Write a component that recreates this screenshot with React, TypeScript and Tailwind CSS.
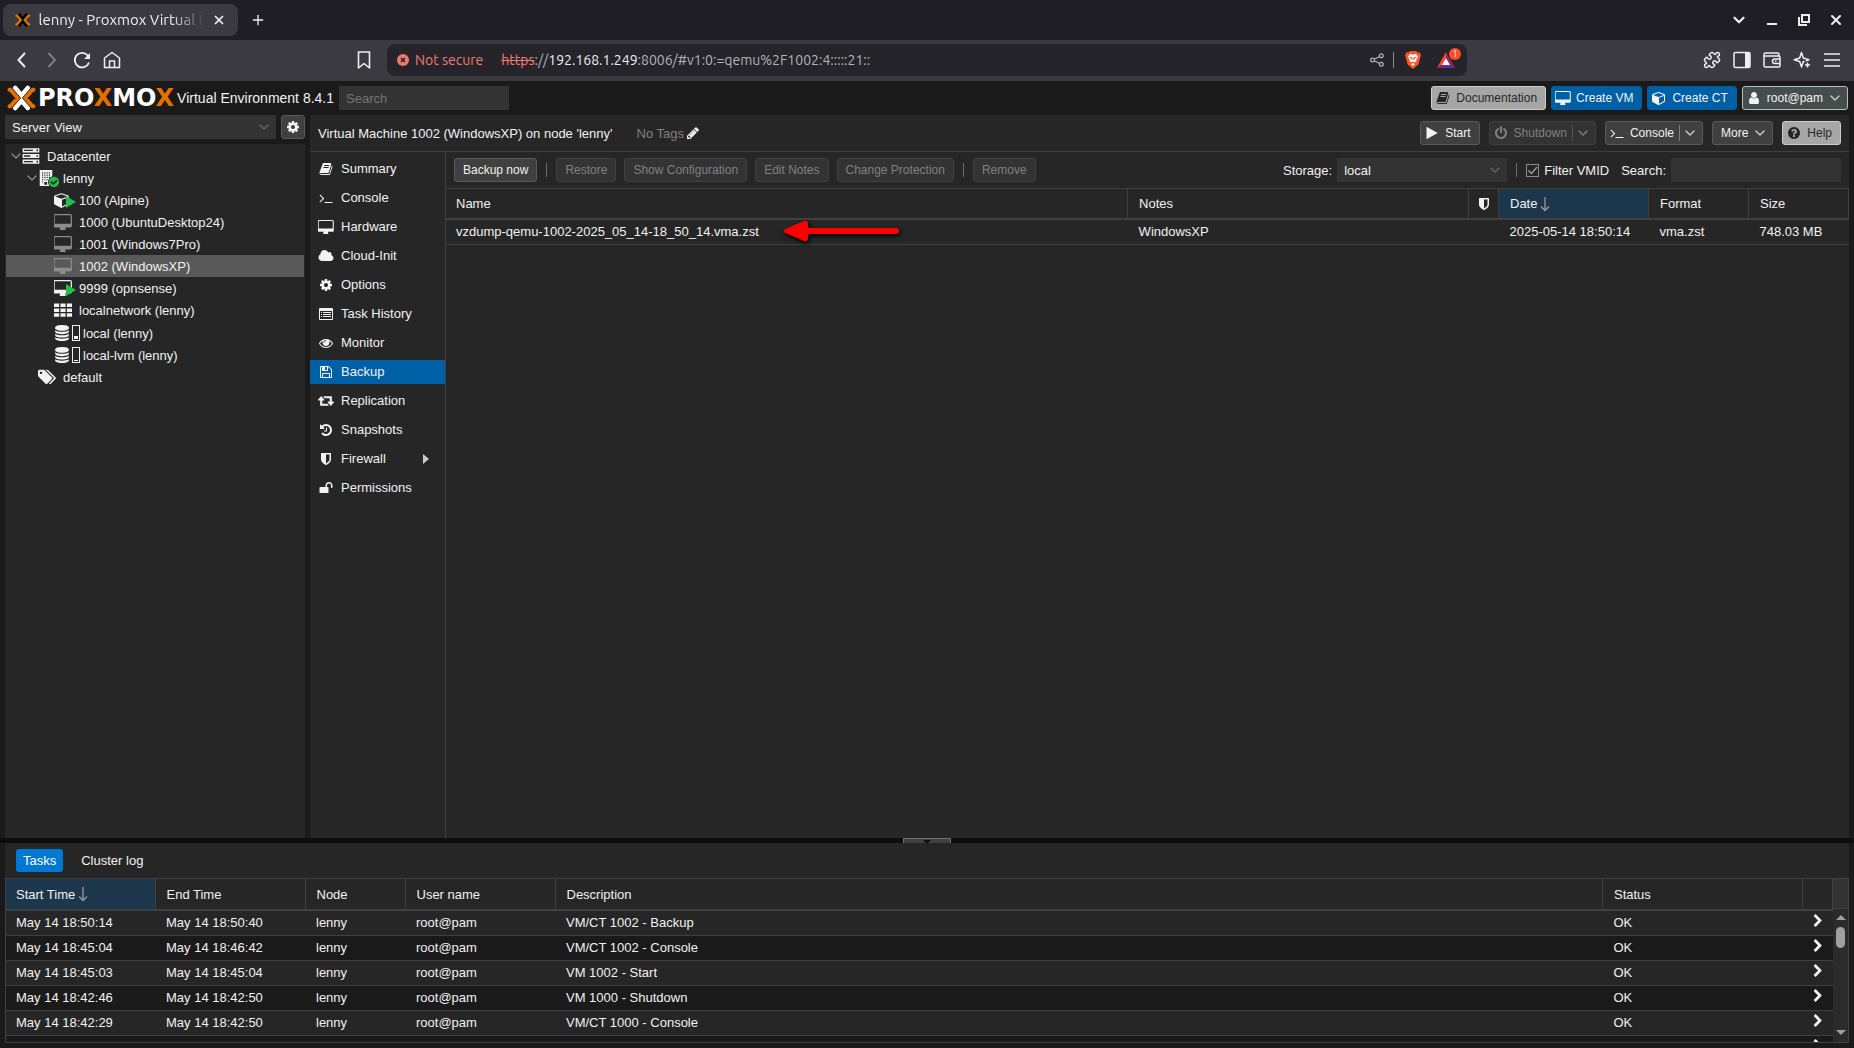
import type { ReactNode } from "react";
import clsx from "clsx";
import { ChevronDown, Plus, Puzzle, X } from "lucide-react";

const PATHS = {
  desktop:
    "M1728 992v-832q0-13-9.5-22.5t-22.5-9.5h-1600q-13 0-22.5 9.5t-9.5 22.5v832q0 13 9.5 22.5t22.5 9.5h1600q13 0 22.5-9.5t9.5-22.5zm128-832v1088q0 66-47 113t-113 47h-544q0 37 16 77.5t32 71 16 43.5q0 26-19 45t-45 19h-512q-26 0-45-19t-19-45q0-14 16-44t32-70 16-78h-544q-66 0-113-47t-47-113v-1088q0-66 47-113t113-47h1600q66 0 113 47t47 113z",
  cube: "M896 1629l640-349v-636l-640 233v752zm-64-865l698-254-698-254-698 254zm832-252v768q0 35-18 65t-49 47l-704 384q-28 16-61 16t-61-16l-704-384q-31-17-49-47t-18-65v-768q0-40 23-73t61-47l704-256q22-8 44-8t44 8l704 256q38 14 61 47t23 73z",
  cog: "M1152 896q0-106-75-181t-181-75-181 75-75 181 75 181 181 75 181-75 75-181zm512-109v222q0 12-8 23t-20 13l-185 28q-19 54-39 91 35 50 107 138 10 12 10 25t-9 23q-27 37-99 108t-94 71q-12 0-26-9l-138-108q-44 23-91 38-16 136-29 186-7 28-36 28h-222q-14 0-24.5-8.5t-11.5-21.5l-28-184q-49-16-90-37l-141 107q-10 9-25 9-14 0-25-11-126-114-165-168-7-10-7-23 0-12 8-23 15-21 51-66.5t54-70.5q-27-50-41-99l-183-27q-13-2-21-12.5t-8-23.5v-222q0-12 8-23t19-13l186-28q14-46 39-92-40-57-107-138-10-12-10-24 0-10 9-23 26-36 98.5-107.5t94.5-71.5q13 0 26 10l138 107q44-23 91-38 16-136 29-186 7-28 36-28h222q14 0 24.5 8.5t11.5 21.5l28 184q49 16 90 37l142-107q9-9 24-9 13 0 25 10 129 119 165 170 7 8 7 22 0 12-8 23-15 21-51 66.5t-54 70.5q26 50 41 98l183 28q13 2 21 12.5t8 23.5z",
  eye: "M1664 960q-152-236-381-353 61 104 61 225 0 185-131.5 316.5t-316.5 131.5-316.5-131.5-131.5-316.5q0-121 61-225-229 117-381 353 133 205 333.5 326.5t434.5 121.5 434.5-121.5 333.5-326.5zm-720-384q0-20-14-34t-34-14q-125 0-214.5 89.5t-89.5 214.5q0 20 14 34t34 14 34-14 14-34q0-86 61-147t147-61q20 0 34-14t14-34zm848 384q0 34-20 69-140 230-376.5 368.5t-499.5 138.5-499.5-139-376.5-368q-20-35-20-69t20-69q140-229 376.5-368t499.5-139 499.5 139 376.5 368q20 35 20 69z",
  book: "M1703 478q40 57 18 129l-275 906q-19 64-76.5 107.5t-122.5 43.5h-923q-77 0-148.5-53.5t-99.5-131.5q-24-67-2-127 0-4 3-27t4-37q1-8-3-21.5t-3-19.5q2-11 8-21t16.5-23.5 16.5-23.5q23-38 45-91.5t30-91.5q3-10 .5-30t-.5-28q3-11 17-28t17-23q21-36 42-92t25-90q1-9-2.5-32t.5-28q4-13 22-30.5t22-22.5q19-26 42.5-84.5t27.5-96.5q1-8-3-25.5t-2-26.5q2-8 9-18t18-23 17-21q8-12 16.5-30.5t15-35 16-36 19.5-32 26.5-23.5 36-11.5 47.5 5.5l-1 3q38-9 51-9h761q74 0 114 56t18 130l-274 906q-36 119-71.5 153.5t-128.5 34.5h-869q-27 0-38 15-11 16-1 43 24 70 144 70h923q29 0 56-15.5t35-41.5l300-987q7-22 5-57 38 15 59 43zm-1064 2q-4 13 2 22.5t20 9.5h608q13 0 25.5-9.5t16.5-22.5l21-64q4-13-2-22.5t-20-9.5h-608q-13 0-25.5 9.5t-16.5 22.5zm-83 256q-4 13 2 22.5t20 9.5h608q13 0 25.5-9.5t16.5-22.5l21-64q4-13-2-22.5t-20-9.5h-608q-13 0-25.5 9.5t-16.5 22.5z",
  terminal:
    "M649 983l-466 466q-10 10-23 10t-23-10l-50-50q-10-10-10-23t10-23l393-393-393-393q-10-10-10-23t10-23l50-50q10-10 23-10t23 10l466 466q10 10 10 23t-10 23zm1079 457v64q0 14-9 23t-23 9h-960q-14 0-23-9t-9-23v-64q0-14 9-23t23-9h960q14 0 23 9t9 23z",
  cloud:
    "M1984 1152q0 159-112.5 271.5t-271.5 112.5h-1088q-185 0-316.5-131.5t-131.5-316.5q0-132 71-241.5t187-163.5q-2-28-2-43 0-212 150-362t362-150q158 0 286.5 88t187.5 230q70-62 166-62 106 0 181 75t75 181q0 75-41 138 129 30 213 134.5t84 239.5z",
  list: "M0 256q0-128 128-128h1536q128 0 128 128v1280q0 128-128 128h-1536q-128 0-128-128zM128 512v992q0 32 32 32h1472q32 0 32-32v-992zM256 640h128v128h-128zM512 640h1024v128h-1024zM256 896h128v128h-128zM512 896h1024v128h-1024zM256 1152h128v128h-128zM512 1152h1024v128h-1024z",
  floppy:
    "M512 1536h768v-384h-768v384zm896 0h128v-896q0-14-10-38.5t-20-34.5l-281-281q-10-10-34-20t-39-10v416q0 40-28 68t-68 28h-576q-40 0-68-28t-28-68v-416h-128v1280h128v-416q0-40 28-68t68-28h832q40 0 68 28t28 68v416zm-384-928v-320q0-13-9.5-22.5t-22.5-9.5h-192q-13 0-22.5 9.5t-9.5 22.5v320q0 13 9.5 22.5t22.5 9.5h192q13 0 22.5-9.5t9.5-22.5zm640 32v928q0 40-28 68t-68 28h-1344q-40 0-68-28t-28-68v-1344q0-40 28-68t68-28h928q40 0 88 20t76 48l280 280q28 28 48 76t20 88z",
  retweet:
    "M1280 1504q0 13-9.5 22.5t-22.5 9.5h-960q-8 0-13.5-2t-9-7-5.5-8-3-11.5-1-11.5v-600h-192q-26 0-45-19t-19-45q0-24 15-41l320-384q19-22 49-22t49 22l320 384q15 17 15 41 0 26-19 45t-45 19h-192v384h576q16 0 25 11l160 192q7 10 7 21zm640-416q0 24-15 41l-320 384q-20 23-49 23t-49-23l-320-384q-15-17-15-41 0-26 19-45t45-19h192v-384h-576q-16 0-25-12l-160-192q-7-9-7-20 0-13 9.5-22.5t22.5-9.5h960q8 0 13.5 2t9 7 5.5 8 3 11.5 1 11.5v600h192q26 0 45 19t19 45z",
  history:
    "M1664 896q0 156-61 298t-164 245-245 164-298 61q-172 0-327-72.5t-264-204.5q-7-10-6.5-22.5t8.5-20.5l137-138q10-9 25-9 16 2 23 12 73 95 179 147t225 52q104 0 198.5-40.5t163.5-109.5 109.5-163.5 40.5-198.5-40.5-198.5-109.5-163.5-163.5-109.5-198.5-40.5q-98 0-188 35.5t-160 101.5l137 138q31 30 14 69-17 40-59 40h-448q-26 0-45-19t-19-45v-448q0-42 40-59 39-17 69 14l130 129q107-101 244.5-156.5t284.5-55.5q156 0 298 61t245 164 164 245 61 298zm-640-288v448q0 14-9 23t-23 9h-320q-14 0-23-9t-9-23v-64q0-14 9-23t23-9h224v-352q0-14 9-23t23-9h64q14 0 23 9t9 23z",
  shield:
    "M1344 960v-640h-448v1137q119-63 213-137 235-184 235-360zm192-768v768q0 86-33.5 170.5t-83 150-118 127.5-126.5 103-121 77.5-89.5 49.5-42.5 20q-12 6-26 6t-26-6q-16-7-42.5-20t-89.5-49.5-121-77.5-126.5-103-118-127.5-83-150-33.5-170.5v-768q0-26 19-45t45-19h1152q26 0 45 19t19 45z",
  unlock:
    "M1728 576v256q0 26-19 45t-45 19h-64q-26 0-45-19t-19-45v-256q0-106-75-181t-181-75-181 75-75 181v192h96q40 0 68 28t28 68v576q0 40-28 68t-68 28h-960q-40 0-68-28t-28-68v-576q0-40 28-68t68-28h672v-192q0-185 131.5-316.5t316.5-131.5 316.5 131.5 131.5 316.5z",
  database:
    "M896 768q237 0 443-43t325-127v170q0 69-103 128t-280 93.5-385 34.5-385-34.5-280-93.5-103-128v-170q119 84 325 127t443 43zm0 768q237 0 443-43t325-127v170q0 69-103 128t-280 93.5-385 34.5-385-34.5-280-93.5-103-128v-170q119 84 325 127t443 43zm0-384q237 0 443-43t325-127v170q0 69-103 128t-280 93.5-385 34.5-385-34.5-280-93.5-103-128v-170q119 84 325 127t443 43zm0-1152q208 0 385 34.5t280 93.5 103 128v128q0 69-103 128t-280 93.5-385 34.5-385-34.5-280-93.5-103-128v-128q0-69 103-128t280-93.5 385-34.5z",
  tags: "M448 448q0-53-37.5-90.5t-90.5-37.5-90.5 37.5-37.5 90.5 37.5 90.5 90.5 37.5 90.5-37.5 37.5-90.5zm1067 576q0 53-37 90l-491 492q-39 37-91 37-53 0-90-37l-715-716q-38-37-64.5-101t-26.5-117v-416q0-52 38-90t90-38h416q53 0 117 26.5t102 64.5l715 714q37 39 37 91zm384 0q0 53-37 90l-491 492q-39 37-91 37-36 0-59-14t-53-45l470-470q37-37 37-90 0-52-37-91l-715-714q-38-38-102-64.5t-117-26.5h224q53 0 117 26.5t102 64.5l715 714q37 39 37 91z",
  power:
    "M1664 896q0 156-61 298t-164 245-245 164-298 61-298-61-245-164-164-245-61-298q0-182 80.5-343t226.5-270q43-32 95.5-25t83.5 50q32 42 24.5 94.5t-49.5 84.5q-98 74-151.5 181t-53.5 228q0 104 40.5 198.5t109.5 163.5 163.5 109.5 198.5 40.5 198.5-40.5 163.5-109.5 109.5-163.5 40.5-198.5q0-121-53.5-228t-151.5-181q-42-32-49.5-84.5t24.5-94.5q31-43 84-50t95 25q146 109 226.5 270t80.5 343zm-640-768v640q0 52-38 90t-90 38-90-38-38-90v-640q0-52 38-90t90-38 90 38 38 90z",
  play: "M1576 927l-1328 738q-23 13-39.5 3t-16.5-36v-1472q0-26 16.5-36t39.5 3l1328 738q23 13 23 31t-23 31z",
  question:
    "M1024 1376v-192q0-14-9-23t-23-9h-192q-14 0-23 9t-9 23v192q0 14 9 23t23 9h192q14 0 23-9t9-23zm256-672q0-88-55.5-163t-138.5-116-170-41q-243 0-371 213-15 24 8 42l132 100q7 6 19 6 16 0 25-12 53-68 86-92 34-24 86-24 48 0 85.5 26t37.5 59q0 38-20 61t-68 45q-63 28-115.5 86.5t-52.5 125.5v36q0 14 9 23t23 9h192q14 0 23-9t9-23q0-19 21.5-49.5t54.5-49.5q32-18 49-28.5t46-35 44.5-48 28-60.5 12.5-81zm384 192q0 209-103 385.5t-279.5 279.5-385.5 103-385.5-103-279.5-279.5-103-385.5 103-385.5 279.5-279.5 385.5-103 385.5 103 279.5 279.5 103 385.5z",
  check:
    "M1412 734q0-28-18-46l-91-90q-19-19-45-19t-45 19l-408 407-226-226q-19-19-45-19t-45 19l-91 90q-18 18-18 46 0 27 18 45l362 362q19 19 45 19 27 0 46-19l543-543q18-18 18-45zm252 162q0 209-103 385.5t-279.5 279.5-385.5 103-385.5-103-279.5-279.5-103-385.5 103-385.5 279.5-279.5 385.5-103 385.5 103 279.5 279.5 103 385.5z",
  chevron:
    "M1363 877l-742 742q-19 19-45 19t-45-19l-166-166q-19-19-19-45t19-45l531-531-531-531q-19-19-19-45t19-45l166-166q19-19 45-19t45 19l742 742q19 19 19 45t-19 45z",
  user: "M1536 1399q0 109-62.5 187t-150.5 78h-854q-88 0-150.5-78t-62.5-187q0-85 8.5-160.5t31.5-152 58.5-131 94-89 134.5-34.5q131 128 313 128t313-128q76 0 134.5 34.5t94 89 58.5 131 31.5 152 8.5 160.5zm-256-887q0 159-112.5 271.5t-271.5 112.5-271.5-112.5-112.5-271.5 112.5-271.5 271.5-112.5 271.5 112.5 112.5 271.5z",
  pencil:
    "M491 1536l91-91-235-235-91 91v107h128v128h107zm523-928q0-22-22-22-10 0-17 7l-542 542q-7 7-7 17 0 22 22 22 10 0 17-7l542-542q7-7 7-17zm-54-192l416 416-832 832h-416v-416zm683 96q0 53-37 90l-166 166-416-416 166-165q36-38 90-38 53 0 91 38l235 234q37 39 37 91z",
  server:
    "M64 128h1664v416h-1664zM64 688h1664v416h-1664zM64 1248h1664v416h-1664zM192 272v128h896v-128zM1440 256v160h160v-160zM192 832v128h640v-128zM1440 816v160h160v-160zM192 1392v128h896v-128zM1440 1376v160h160v-160z",
  building:
    "M192 0h1408v1792h-1408zM448 256v128h128v-128zM704 256v128h128v-128zM960 256v128h128v-128zM1216 256v128h128v-128zM448 512v128h128v-128zM704 512v128h128v-128zM960 512v128h128v-128zM1216 512v128h128v-128zM448 768v128h128v-128zM704 768v128h128v-128zM960 768v128h128v-128zM1216 768v128h128v-128zM448 1024v128h128v-128zM704 1024v128h128v-128zM960 1024v128h128v-128zM448 1280v128h128v-128zM704 1344v320h320v-320z",
  th: "M0 256h512v352h-512zM640 256h512v352h-512zM1280 256h512v352h-512zM0 736h512v352h-512zM640 736h512v352h-512zM1280 736h512v352h-512zM0 1216h512v352h-512zM640 1216h512v352h-512zM1280 1216h512v352h-512z",
};

type IconName = keyof typeof PATHS;

// glyphs that are wider than the 1792 unit square
const WIDE: Partial<Record<IconName, string>> = {
  desktop: "0 0 1856 1664",
  cloud: "0 64 2048 1664",
  retweet: "0 128 1920 1664",
  tags: "0 0 1920 1792",
};

interface IconProps {
  name: IconName;
  className?: string;
}

const Icon = ({ name, className = "size-3.5" }: IconProps) => (
  <svg
    viewBox={WIDE[name] ?? "0 0 1792 1792"}
    className={clsx("shrink-0 fill-current", className)}
    fillRule={
      ["server", "building", "list"].includes(name) ? "evenodd" : "nonzero"
    }
    aria-hidden="true"
  >
    <path d={PATHS[name]} />
  </svg>
);

interface ToolButtonProps {
  icon?: IconName;
  label: string;
  tone?: "dark" | "light" | "blue" | "user";
  disabled?: boolean;
  arrow?: boolean;
  split?: boolean;
}

const ToolButton = ({
  icon,
  label,
  tone = "dark",
  disabled,
  arrow,
  split,
}: ToolButtonProps) => (
  <button
    type="button"
    disabled={disabled}
    className={clsx(
      "flex h-6 shrink-0 items-center rounded-[3px] border text-xs whitespace-nowrap",
      icon ? "pl-[3px]" : "pl-2",
      arrow ? "pr-1" : "pr-2",
      disabled && "border-[#404040] bg-[#333333] text-[#808080]",
      !disabled && tone === "dark" && "border-[#595959] bg-[#404040] text-[#f2f2f2]",
      tone === "light" && "border-[#cccccc] bg-[#a6a6a6] text-[#262626]",
      tone === "blue" && "border-[#0060a6] bg-[#0060a6] text-[#f2f2f2]",
      tone === "user" && "border-[#b5bfbd] bg-[#464d4d] text-[#f2f2f2]",
    )}
  >
    {icon && (
      <span className="mr-[5px] flex w-4 justify-center">
        <Icon
          name={icon}
          className={icon === "desktop" ? "h-3.5 w-4" : "size-3.5"}
        />
      </span>
    )}
    {label}
    {split && (
      <span
        className={clsx(
          "ml-[5px] h-4 w-px",
          disabled ? "bg-[#555555]" : "bg-[#808080]",
        )}
      />
    )}
    {arrow && (
      <ChevronDown
        size={16}
        strokeWidth={2}
        className={clsx(split ? "ml-0.5" : "ml-1", !disabled && "text-[#cccccc]")}
      />
    )}
  </button>
);

const Separator = () => <span className="mx-px h-3.5 w-px bg-[#6b6b6b]" />;

const ProxmoxMark = ({
  className,
  inner,
}: {
  className: string;
  inner: string;
}) => (
  <svg viewBox="0 0 30 26" className={className} fill="none" aria-hidden="true">
    <path d="M8.500 2.500 15 10l6.500-7.500M8.500 23.500 15 16l6.500 7.500" stroke={inner} strokeWidth="4.600" strokeLinecap="round" />
    <path d="M2.500 4.500h1L11 13l-7.500 8.500h-1M27.500 4.500h-1L19 13l7.500 8.500h1" stroke="#e57000" strokeWidth="4" strokeLinecap="round" />
  </svg>
);

const Browser = () => (
  <header className="font-['Ubuntu','Noto_Sans',sans-serif] text-sm text-[#eeeef2]">
    <div className="flex h-10 items-center bg-[#1f1e24] pl-[3px]">
      <div className="flex h-8 w-[235px] items-center rounded-lg bg-[#3b3a40] px-3">
        <ProxmoxMark className="h-4 w-4" inner="#000000" />
        <span className="ml-2 w-[170px] overflow-hidden text-[15px] whitespace-nowrap [mask-image:linear-gradient(to_right,black_80%,transparent)]">
          lenny - Proxmox Virtual E
        </span>
        <button type="button" aria-label="Close tab" className="ml-2">
          <X size={14} strokeWidth={3} />
        </button>
      </div>
      <button type="button" aria-label="New tab" className="ml-3">
        <Plus size={16} strokeWidth={2} />
      </button>
      <div className="ml-auto flex items-center pr-2.5">
        <button type="button" aria-label="Search tabs" className="mr-4">
          <ChevronDown size={18} strokeWidth={3} />
        </button>
        <button type="button" aria-label="Minimize" className="mr-4 flex size-4 items-end justify-center pb-[3px]">
          <span className="h-0.5 w-2.5 bg-current" />
        </button>
        <button type="button" aria-label="Restore window" className="mr-4">
          <svg viewBox="0 0 16 16" className="size-4" fill="none" stroke="currentColor" strokeWidth="2">
            <path d="M6 3h7v7H6zM3 5v8h8" />
          </svg>
        </button>
        <button type="button" aria-label="Close window">
          <X size={16} strokeWidth={3} />
        </button>
      </div>
    </div>
    <div className="flex h-[41px] items-center bg-[#3b3a40] pb-px pl-3">
      <button type="button" aria-label="Back">
        <svg viewBox="0 0 20 20" className="size-5" fill="none" stroke="currentColor" strokeWidth="2">
          <path d="M13 3 6.500 10l6.500 7" />
        </svg>
      </button>
      <button type="button" aria-label="Forward" className="ml-2.5 text-[#7c7b82]">
        <svg viewBox="0 0 20 20" className="size-5" fill="none" stroke="currentColor" strokeWidth="2">
          <path d="m6.500 3 6.500 7-6.500 7" />
        </svg>
      </button>
      <button type="button" aria-label="Reload" className="ml-2.5">
        <svg viewBox="0 0 20 20" className="size-5" fill="none" stroke="currentColor" strokeWidth="1.800">
          <path d="M17 12.500A7.300 7.300 0 1 1 16 5.800" />
          <path d="M18 3v6h-6z" fill="currentColor" stroke="none" />
        </svg>
      </button>
      <button type="button" aria-label="Home" className="ml-2.5">
        <svg viewBox="0 0 20 20" className="size-5" fill="none" stroke="currentColor" strokeWidth="1.500">
          <path d="M2.500 8 10 2.500 17.500 8v9.500h-15zM7.500 17v-6h5v6" strokeLinejoin="round" />
        </svg>
      </button>
      <button type="button" aria-label="Bookmark this page" className="ml-[232px]">
        <svg viewBox="0 0 20 20" className="size-5" fill="none" stroke="currentColor" strokeWidth="1.600">
          <path d="M4.500 2h11v16L10 13.500 4.500 18z" strokeLinejoin="round" />
        </svg>
      </button>
      <div className="ml-[13px] flex h-8 w-[1080px] min-w-0 items-center rounded-lg bg-[#25242a] pr-2 pl-2.5">
        <svg viewBox="0 0 12 12" className="size-3" aria-hidden="true">
          <circle cx="6" cy="6" r="6" fill="#f1786f" />
          <path d="m4 4 4 4m0-4-4 4" stroke="#25242a" strokeWidth="1.600" />
        </svg>
        <span className="ml-1.5 text-[#f1786f]">Not secure</span>
        <span className="ml-[18px] text-[#b4b3ba]">
          <s className="text-[#f1786f]">https</s>://
          <span className="text-[#eeeef2]">192.168.1.249</span>
          :8006/#v1:0:=qemu%2F1002:4:::::21::
        </span>
        <div className="ml-auto flex items-center">
          <button type="button" aria-label="Share">
            <svg viewBox="0 0 14 14" className="size-3.5 text-[#b4b3ba]" fill="none" stroke="currentColor" strokeWidth="1.200">
              <circle cx="2.500" cy="7" r="1.900" />
              <circle cx="11.300" cy="2.700" r="1.900" />
              <circle cx="11.300" cy="11.300" r="1.900" />
              <path d="m4.200 6.200 5.400-2.700M4.200 7.800l5.400 2.700" />
            </svg>
          </button>
          <span className="mx-[9px] h-4 w-px bg-[#8a8990]" />
          <button type="button" aria-label="Brave Shields" className="ml-0.5">
            <svg viewBox="0 0 16 18" className="h-[18px] w-4">
              <path d="M3.500 1.500 4.800 0h6.400l1.300 1.500 2-.2L16 4.500l-.6 1.500-2 7.500L8 18l-5.400-4.500L.6 6 0 4.500l1.500-3.200z" fill="#fb542b" />
              <path d="m8 3.500 3-.6 2.200 3-2 2.600.3 1.700-2 1.100L8 10.700l-1.500.6-2-1.100.3-1.700-2-2.600L5 2.900zM8 12l2 1.200L8 15l-2-1.800z" fill="#fff" />
              <path d="m4.500 6 2.300.8L6.200 8M11.500 6l-2.300.8.600 1.200M8 6.500v3" stroke="#fb542b" fill="none" />
            </svg>
          </button>
          <button type="button" aria-label="Brave Rewards" className="relative mr-1 ml-4">
            <svg viewBox="0 0 18 16" className="h-4 w-[18px]">
              <path d="M9 0 0 16l5-3 4-7z" fill="#ff4724" />
              <path d="M9 0v6l4 7 5 3z" fill="#9e1f63" />
              <path d="m0 16 5-3h8l5 3z" fill="#662d91" />
              <path d="m9 6 4 7H5z" fill="#fff" />
            </svg>
            <span className="absolute -top-1 left-3 flex size-3 items-center justify-center rounded-full bg-[#fb4f2b] text-[9px] leading-none">
              1
            </span>
          </button>
        </div>
      </div>
      <div className="ml-auto flex items-center gap-3 pr-[13px]">
        <button type="button" aria-label="Extensions">
          <Puzzle size={18} strokeWidth={2} />
        </button>
        <button type="button" aria-label="Side panel">
          <svg viewBox="0 0 18 18" className="size-[18px]" fill="none" stroke="currentColor" strokeWidth="1.500">
            <rect x="1" y="1.500" width="16" height="15" rx="1.500" />
            <path d="M12 2h5v14h-5z" fill="currentColor" stroke="none" />
          </svg>
        </button>
        <button type="button" aria-label="Wallet">
          <svg viewBox="0 0 18 18" className="size-[18px]" fill="none" stroke="currentColor" strokeWidth="1.500">
            <path d="M16 5V3.500Q16 2 14.500 2h-12Q1 2 1 3.500v11Q1 16 2.500 16h13q1.500 0 1.500-1.500v-8Q17 5 15.500 5H1M17 8h-5.500Q9.500 8 9.500 10.300t2 2.300H17M12 10.300h1.500" />
          </svg>
        </button>
        <button type="button" aria-label="Leo AI">
          <svg viewBox="0 0 18 18" className="size-[18px]" fill="none" stroke="currentColor" strokeWidth="1.500" strokeLinejoin="round">
            <path d="M11.500 11 10.300 10.500 8.500 16l-1.800-5.500L1.200 8.700 6.700 7l1.800-5.500L10.300 7l5.500 1.700-3 1M14.500 11.500v5M12 14h5" />
          </svg>
        </button>
        <button type="button" aria-label="Menu">
          <svg viewBox="0 0 18 18" className="size-[18px]" stroke="currentColor" strokeWidth="1.500">
            <path d="M1 3h16M1 9h16M1 15h16" />
          </svg>
        </button>
      </div>
    </div>
  </header>
);

const TopBar = () => (
  <div className="flex h-[34px] items-center pr-1.5 pl-[7px]">
    <ProxmoxMark className="h-[26px] w-[29px]" inner="#ffffff" />
    <span className="ml-0.5 font-['DejaVu_Sans',sans-serif] text-2xl leading-6 font-bold text-white">
      PRO<span className="text-[#e57000]">X</span>MO
      <span className="text-[#e57000]">X</span>
    </span>
    <span className="ml-[3px] text-sm whitespace-nowrap">
      Virtual Environment 8.4.1
    </span>
    <input
      type="text"
      aria-label="Search"
      placeholder="Search"
      className="ml-[5px] h-6 w-[170px] bg-[#333333] px-[7px] outline-none placeholder:text-[#757575]"
    />
    <div className="ml-auto flex gap-[5px]">
      <ToolButton icon="book" label="Documentation" tone="light" />
      <ToolButton icon="desktop" label="Create VM" tone="blue" />
      <ToolButton icon="cube" label="Create CT" tone="blue" />
      <ToolButton icon="user" label="root@pam" tone="user" arrow />
    </div>
  </div>
);

interface TreeNode {
  label: string;
  depth: number;
  icon: ReactNode;
  expanded?: boolean;
  selected?: boolean;
  storage?: boolean;
}

const Guest = ({
  name,
  running,
}: {
  name: "desktop" | "cube";
  running?: boolean;
}) => (
  <span className="relative">
    <Icon
      name={name}
      className={clsx(
        name === "desktop" ? "h-4 w-[18px]" : "size-4",
        !running && "text-[#8c8c8c]",
      )}
    />
    {running && (
      <svg viewBox="0 0 10 12" className="absolute top-1 left-3 h-3 w-2.5">
        <path d="M0 0v12l10-6z" fill="#21bf4b" />
      </svg>
    )}
  </span>
);

const Storage = ({ fill }: { fill: string }) => (
  <>
    <Icon name="database" className="size-4" />
    <span className="ml-0.5 flex h-4 w-2 items-end border border-current p-px">
      <span className={clsx("w-full bg-current", fill)} />
    </span>
  </>
);

const tree: TreeNode[] = [
  { label: "Datacenter", depth: 0, expanded: true, icon: <Icon name="server" className="size-[18px]" /> },
  {
    label: "lenny",
    depth: 1,
    expanded: true,
    icon: (
      <span className="relative">
        <Icon name="building" className="size-4" />
        <span className="absolute top-1.5 left-2.5 rounded-full bg-[#262626]">
          <Icon name="check" className="size-3 text-[#21bf4b]" />
        </span>
      </span>
    ),
  },
  { label: "100 (Alpine)", depth: 2, icon: <Guest name="cube" running /> },
  { label: "1000 (UbuntuDesktop24)", depth: 2, icon: <Guest name="desktop" /> },
  { label: "1001 (Windows7Pro)", depth: 2, icon: <Guest name="desktop" /> },
  { label: "1002 (WindowsXP)", depth: 2, selected: true, icon: <Guest name="desktop" /> },
  { label: "9999 (opnsense)", depth: 2, icon: <Guest name="desktop" running /> },
  { label: "localnetwork (lenny)", depth: 2, icon: <Icon name="th" className="size-[18px]" /> },
  { label: "local (lenny)", depth: 2, storage: true, icon: <Storage fill="h-[3px]" /> },
  { label: "local-lvm (lenny)", depth: 2, storage: true, icon: <Storage fill="h-px" /> },
  { label: "default", depth: 1, icon: <Icon name="tags" className="size-[18px]" /> },
];

const INDENT = ["pl-1", "pl-5", "pl-9"];

const Sidebar = () => (
  <aside className="flex w-[300px] shrink-0 flex-col">
    <div className="flex gap-[5px]">
      <div className="relative flex-1">
        <select
          aria-label="View"
          className="h-6 w-full appearance-none bg-[#333333] px-[7px] outline-none"
        >
          <option>Server View</option>
        </select>
        <ChevronDown size={16} className="pointer-events-none absolute top-1 right-1 text-[#666666]" />
      </div>
      <button
        type="button"
        aria-label="Tree settings"
        className="flex size-6 items-center justify-center rounded-[3px] border border-[#595959] bg-[#404040]"
      >
        <Icon name="cog" />
      </button>
    </div>
    <ul className="mt-[5px] flex-1 bg-[#262626] px-px pt-px">
      {tree.map(({ label, depth, icon, expanded, selected, storage }) => (
        <li key={label}>
          <button
            type="button"
            className={clsx(
              "flex h-[22px] w-full items-center",
              INDENT[depth],
              selected && "bg-[#595959]",
              label === "local (lenny)" && "mt-px",
            )}
          >
            <span className="flex w-3 shrink-0 justify-center">
              {expanded && (
                <ChevronDown size={16} strokeWidth={2} className="shrink-0 text-[#8c8c8c]" />
              )}
            </span>
            <span className={clsx("flex shrink-0 items-center", storage ? "w-[29px]" : "w-[25px]")}>
              {icon}
            </span>
            {label}
          </button>
        </li>
      ))}
    </ul>
  </aside>
);

const menu: { label: string; icon: IconName }[] = [
  { label: "Summary", icon: "book" },
  { label: "Console", icon: "terminal" },
  { label: "Hardware", icon: "desktop" },
  { label: "Cloud-Init", icon: "cloud" },
  { label: "Options", icon: "cog" },
  { label: "Task History", icon: "list" },
  { label: "Monitor", icon: "eye" },
  { label: "Backup", icon: "floppy" },
  { label: "Replication", icon: "retweet" },
  { label: "Snapshots", icon: "history" },
  { label: "Firewall", icon: "shield" },
  { label: "Permissions", icon: "unlock" },
];

const Menu = () => (
  <nav className="flex w-[136px] shrink-0 flex-col gap-[5px] border-r border-[#404040] pt-[5px]">
    {menu.map(({ label, icon }) => (
      <a
        key={label}
        href="#"
        className={clsx(
          "flex h-6 items-center pb-px pl-2",
          label === "Backup" && "bg-[#0060a6]",
        )}
      >
        <span className="mr-[7px] flex w-4 justify-center">
          <Icon
            name={icon}
            className={
              ["desktop", "cloud", "retweet"].includes(icon)
                ? "h-3.5 w-4"
                : "size-3.5"
            }
          />
        </span>
        {label}
        {label === "Firewall" && (
          <span className="mr-4 ml-auto border-y-[5px] border-l-[6px] border-y-transparent border-l-[#cccccc]" />
        )}
      </a>
    ))}
  </nav>
);

const SortArrow = () => (
  <svg
    viewBox="0 0 10 16"
    className="ml-[3px] h-4 w-2.5 text-[#999999]"
    fill="none"
    stroke="currentColor"
    strokeWidth="1.300"
    aria-hidden="true"
  >
    <path d="M5 1v13.500M1 10.500l4 4 4-4" />
  </svg>
);

const head = "border-r border-[#404040] pr-2 pl-[11px] first:pl-2.5 text-left font-normal";
const data = "pr-2 pl-[11px] first:pl-2.5";

const BackupTable = () => (
  <table className="w-full table-fixed border-collapse">
    <colgroup>
      <col className="w-[48.6%]" />
      <col />
      <col className="w-[30px]" />
      <col className="w-[150px]" />
      <col className="w-[100px]" />
      <col className="w-[100px]" />
    </colgroup>
    <thead>
      <tr className="h-[30px] border-b-2 border-[#404040]">
        <th className={head}>Name</th>
        <th className={head}>Notes</th>
        <th aria-label="Protected" className="border-r border-[#404040]">
          <Icon name="shield" className="mx-auto size-3.5" />
        </th>
        <th className={clsx(head, "bg-[#1c374c]")}>
          <span className="flex items-center">
            Date
            <SortArrow />
          </span>
        </th>
        <th className={head}>Format</th>
        <th className={head}>Size</th>
      </tr>
    </thead>
    <tbody>
      <tr className="h-[25px] border-b border-[#404040]">
        <td className={clsx(data, "relative")}>
          vzdump-qemu-1002-2025_05_14-18_50_14.vma.zst
          <svg
            viewBox="0 0 116 22"
            className="absolute top-0 left-[338px] h-[22px] w-[116px] overflow-visible drop-shadow-[1px_2px_2px_#000000]"
            aria-hidden="true"
          >
            <path d="M1 9 20 1q4-1 4 3v4h88a3 3 0 0 1 0 6H24v4q0 4-4 3L1 13q-2-2 0-4z" fill="#ff0000" />
          </svg>
        </td>
        <td className={data}>WindowsXP</td>
        <td />
        <td className={data}>2025-05-14 18:50:14</td>
        <td className={data}>vma.zst</td>
        <td className={data}>748.03 MB</td>
      </tr>
    </tbody>
  </table>
);

const Content = () => (
  <main className="flex min-w-0 flex-1 flex-col bg-[#262626]">
    <div className="flex h-[37px] items-center border-b border-[#404040] pr-2 pl-2">
      <h1>Virtual Machine 1002 (WindowsXP) on node 'lenny'</h1>
      <button type="button" className="ml-6 flex items-center gap-0.5">
        <span className="text-[#808080]">No Tags</span>
        <Icon name="pencil" />
      </button>
      <div className="ml-auto flex gap-[9px]">
        <ToolButton icon="play" label="Start" />
        <ToolButton icon="power" label="Shutdown" disabled arrow split />
        <ToolButton icon="terminal" label="Console" arrow split />
        <ToolButton label="More" arrow />
        <ToolButton icon="question" label="Help" tone="light" />
      </div>
    </div>
    <div className="flex flex-1">
      <Menu />
      <div className="min-w-0 flex-1">
        <div className="flex h-[37px] items-center gap-2 border-b border-[#404040] px-2">
          <ToolButton label="Backup now" />
          <Separator />
          <ToolButton label="Restore" disabled />
          <ToolButton label="Show Configuration" disabled />
          <ToolButton label="Edit Notes" disabled />
          <ToolButton label="Change Protection" disabled />
          <Separator />
          <ToolButton label="Remove" disabled />
          <div className="ml-auto flex items-center gap-[5px]">
            <label htmlFor="storage">Storage:</label>
            <div className="relative w-[170px]">
              <select
                id="storage"
                className="h-6 w-full appearance-none bg-[#333333] px-[7px] outline-none"
              >
                <option>local</option>
              </select>
              <ChevronDown size={16} className="pointer-events-none absolute top-1 right-1 text-[#666666]" />
            </div>
          </div>
          <Separator />
          <label className="flex items-center gap-[5px]">
            <span className="relative size-[13px]">
              <input
                type="checkbox"
                defaultChecked
                className="peer block size-[13px] appearance-none border border-[#8c8c8c]"
              />
              <svg
                viewBox="0 0 13 13"
                className="pointer-events-none absolute inset-0 hidden size-[13px] peer-checked:block"
                fill="none"
                stroke="#999999"
                strokeWidth="1.500"
              >
                <path d="m2.500 6.500 3 3L11 3" />
              </svg>
            </span>
            Filter VMID
          </label>
          <div className="ml-1 flex items-center gap-[5px]">
            <label htmlFor="search">Search:</label>
            <input
              id="search"
              type="text"
              className="h-6 w-[170px] bg-[#333333] px-[7px] outline-none"
            />
          </div>
        </div>
        <BackupTable />
      </div>
    </div>
  </main>
);

const tasks = [
  ["May 14 18:50:14", "May 14 18:50:40", "lenny", "root@pam", "VM/CT 1002 - Backup", "OK"],
  ["May 14 18:45:04", "May 14 18:46:42", "lenny", "root@pam", "VM/CT 1002 - Console", "OK"],
  ["May 14 18:45:03", "May 14 18:45:04", "lenny", "root@pam", "VM 1002 - Start", "OK"],
  ["May 14 18:42:46", "May 14 18:42:50", "lenny", "root@pam", "VM 1000 - Shutdown", "OK"],
  ["May 14 18:42:29", "May 14 18:42:50", "lenny", "root@pam", "VM/CT 1000 - Console", "OK"],
  ["", "", "", "", "", ""],
];

const TaskLog = () => (
  <section className="mx-[5px] mb-[5px] flex h-[200px] shrink-0 flex-col bg-[#262626]">
    <div className="flex h-[35px] shrink-0 items-center gap-[11px] px-[11px]">
      <button type="button" className="h-[23px] rounded-[3px] bg-[#0078d4] px-[7px] text-white">
        Tasks
      </button>
      <button type="button" className="h-[23px] px-[7px]">
        Cluster log
      </button>
    </div>
    <div className="flex min-h-0 flex-1 border border-[#404040]">
      <div className="min-w-0 flex-1 overflow-hidden">
        <table className="w-full table-fixed border-collapse">
          <colgroup>
            <col className="w-[149px]" />
            <col className="w-[150px]" />
            <col className="w-[100px]" />
            <col className="w-[150px]" />
            <col />
            <col className="w-[200px]" />
            <col className="w-[30px]" />
          </colgroup>
          <thead>
            <tr className="h-[31px] border-b-2 border-[#404040]">
              <th className={clsx(head, "bg-[#1c374c]")}>
                <span className="flex items-center">
                  Start Time
                  <SortArrow />
                </span>
              </th>
              <th className={head}>End Time</th>
              <th className={head}>Node</th>
              <th className={head}>User name</th>
              <th className={head}>Description</th>
              <th className={head}>Status</th>
              <th className={head} />
            </tr>
          </thead>
          <tbody>
            {tasks.map((task, row) => (
              <tr
                key={row}
                className="h-[25px] border-b border-[#404040] even:bg-[#1a1a1a]"
              >
                {task.map((cell, col) => (
                  <td key={col} className={data}>
                    {cell}
                  </td>
                ))}
                <td>
                  <Icon name="chevron" className="mx-auto mb-1 size-3.5" />
                </td>
              </tr>
            ))}
          </tbody>
        </table>
      </div>
      <div className="flex w-[15px] shrink-0 flex-col items-center bg-[#2b2b2b]">
        <div className="h-[30px] w-full border-b border-[#404040] bg-[#333333]" />
        <span className="mt-1.5 border-x-[5px] border-b-[5px] border-x-transparent border-b-[#9f9f9f]" />
        <span className="mt-[7px] h-[21px] w-[9px] rounded-full bg-[#9f9f9f]" />
        <span className="mt-auto mb-[7px] border-x-[5px] border-t-[5px] border-x-transparent border-t-[#9f9f9f]" />
      </div>
    </div>
  </section>
);

export default function App() {
  return (
    <div className="flex h-screen flex-col overflow-hidden bg-[#1a1a1a] font-['Liberation_Sans',Arial,sans-serif] text-[13px] leading-[17px] text-[#f2f2f2]">
      <Browser />
      <TopBar />
      <div className="flex min-h-0 flex-1 gap-[5px] px-[5px]">
        <Sidebar />
        <Content />
      </div>
      <div className="flex h-[5px] shrink-0 justify-center bg-[#0d0d0d]">
        <div className="flex w-12 justify-center border border-b-0 border-[#737373] bg-[#404040]">
          <span className="mt-px border-x-4 border-t-4 border-x-transparent border-t-[#0d0d0d]" />
        </div>
      </div>
      <TaskLog />
    </div>
  );
}
